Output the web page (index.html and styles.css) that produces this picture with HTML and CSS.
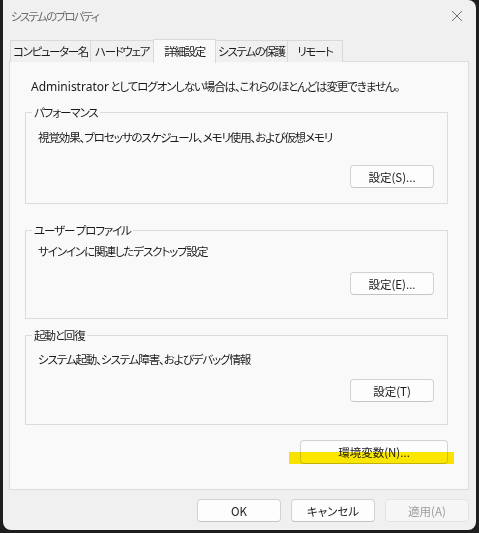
FILE: index.html
```html
<!DOCTYPE html>
<html lang="ja">
<head>
<meta charset="utf-8">
<title>システムのプロパティ</title>
<link rel="stylesheet" href="styles.css">
</head>
<body>
<div class="window">
  <div class="titlebar">
    <span class="title">システムのプロパティ</span>
    <button class="close" aria-label="閉じる">
      <svg width="12" height="12" viewBox="0 0 12 12"><path d="M1 1 L11 11 M11 1 L1 11" stroke="#6f6f6f" stroke-width="1" fill="none"/></svg>
    </button>
  </div>

  <div class="tabs">
    <div class="tab t1">コンピューター名</div>
    <div class="tab t2">ハードウェア</div>
    <div class="tab t3 active">詳細設定</div>
    <div class="tab t4">システムの保護</div>
    <div class="tab t5">リモート</div>
  </div>

  <div class="panel">
    <p class="notice"><span class="latin">Administrator</span> としてログオンしない場合は、これらのほとんどは変更できません。</p>

    <fieldset class="group g1">
      <legend>パフォーマンス</legend>
      <p class="desc">視覚効果、プロセッサのスケジュール、メモリ使用、および仮想メモリ</p>
      <div class="actions"><button class="btn">設定(S)...</button></div>
    </fieldset>

    <fieldset class="group g2">
      <legend>ユーザー プロファイル</legend>
      <p class="desc">サインインに関連したデスクトップ設定</p>
      <div class="actions"><button class="btn">設定(E)...</button></div>
    </fieldset>

    <fieldset class="group g3">
      <legend>起動と回復</legend>
      <p class="desc">システム起動、システム障害、およびデバッグ情報</p>
      <div class="actions"><button class="btn">設定(T)</button></div>
    </fieldset>

    <div class="env-row">
      <div class="env-wrap">
        <button class="btn env">環境変数(N)...</button>
        <span class="marker"></span>
      </div>
    </div>
  </div>

  <div class="footer">
    <button class="btn">OK</button>
    <button class="btn">キャンセル</button>
    <button class="btn" disabled>適用(A)</button>
  </div>
</div>
</body>
</html>
```

FILE: styles.css
```css
* { box-sizing: border-box; }

html, body {
  margin: 0;
  height: 100%;
  background: #1e1e1e;
}

body {
  font-family: "Noto Sans CJK JP", "Noto Sans", sans-serif;
  font-size: 11.5px;
  font-feature-settings: "palt";
  letter-spacing: -1.1px;
  color: #1b1b1b;
  overflow: hidden;
}

.latin {
  font-family: "Noto Sans", "Noto Sans CJK JP", sans-serif;
  font-size: 12px;
  letter-spacing: 0;
}

.window {
  margin-left: 3px;
  width: 473px;
  height: 530px;
  background: #f0f0f0;
  border-radius: 0 8px 8px 8px;
  display: flex;
  flex-direction: column;
}

/* title bar */
.titlebar {
  height: 38px;
  display: flex;
  align-items: flex-start;
  justify-content: space-between;
  padding: 7px 8px 0 8px;
}

.title {
  line-height: 18px;
  color: #6e6e6e;
  letter-spacing: -1.7px;
}

.close {
  border: 0;
  background: none;
  padding: 0;
  margin: 3px 5px 0 0;
  width: 12px;
  height: 12px;
  display: flex;
}

/* tab strip */
.tabs {
  display: flex;
  align-items: flex-end;
  padding-left: 7px;
  height: 24px;
  position: relative;
  z-index: 1;
  margin-bottom: -1px;
}

.tab {
  height: 22px;
  line-height: 20px;
  text-align: center;
  border: 1px solid #d9d9d9;
  border-bottom: 0;
  margin-right: -1px;
  background: #f0f0f0;
  white-space: nowrap;
  letter-spacing: -1.35px;
}

.t1 { width: 81px; }
.t2 { width: 64px; }
.t3 { width: 63px; }
.t4 { width: 73px; }
.t5 { width: 56px; }

.tab.active {
  height: 24px;
  line-height: 22px;
  background: #f9f9f9;
  margin-bottom: -1px;
  position: relative;
  z-index: 2;
}

/* main page */
.panel {
  margin: 0 7px 0 6px;
  height: 429px;
  background: #f9f9f9;
  border: 1px solid #dcdcdc;
  padding: 16px 20px 0 15px;
}

.notice {
  margin: 0 0 9px 6px;
  line-height: 16px;
}

.group {
  margin: 0;
  padding: 0 13px 0 12px;
  border: 1px solid #dcdcdc;
  min-width: 0;
}

.group legend {
  padding: 0 2px;
  margin-left: -6px;
  line-height: 16px;
}

.desc {
  margin: 0;
  line-height: 16px;
}

.actions {
  display: flex;
  justify-content: flex-end;
}

.g1 { height: 100px; }
.g1 .desc { margin-top: 9px; }
.g1 .actions { margin-top: 20px; }

.g2 { height: 97px; margin-top: 18px; }
.g2 .desc { margin-top: 5px; }
.g2 .actions { margin-top: 13px; }

.g3 { height: 98px; margin-top: 8px; }
.g3 .desc { margin-top: 8px; }
.g3 .actions { margin-top: 12px; }

.btn {
  font: inherit;
  color: #1b1b1b;
  width: 84px;
  height: 23px;
  padding: 0;
  background: #fdfdfd;
  border: 1px solid #d2d2d2;
  border-bottom-color: #c4c4c4;
  border-radius: 4px;
}

.btn:disabled {
  background: #f6f6f6;
  border-color: #e4e4e4;
  color: #9d9d9d;
}

.env-row {
  display: flex;
  justify-content: flex-end;
  margin-top: 15px;
}

.env-wrap {
  position: relative;
}

.btn.env {
  width: 148px;
  height: 24px;
}

/* yellow highlighter stroke across the lower half of the button */
.marker {
  position: absolute;
  left: -11px;
  right: -6px;
  top: 12px;
  height: 12px;
  background: #fde800;
  mix-blend-mode: multiply;
}

/* dialog buttons */
.footer {
  display: flex;
  justify-content: flex-end;
  gap: 10px;
  padding: 9px 7px 0 0;
}
```
